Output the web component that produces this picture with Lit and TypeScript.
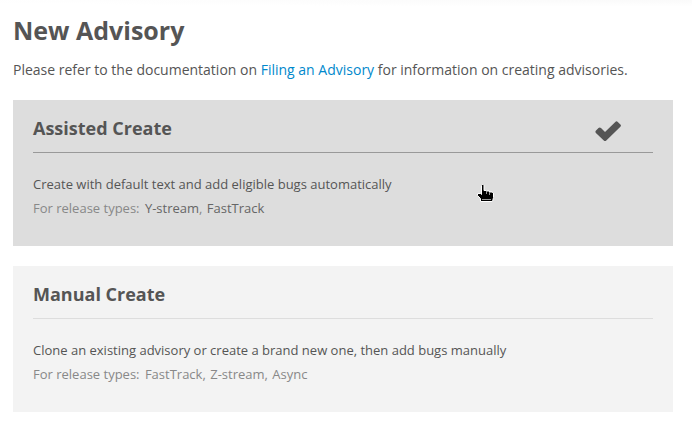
import { LitElement, html, css, nothing } from "lit";
import { customElement, state } from "lit/decorators.js";

interface Mode {
  id: string;
  title: string;
  text: string;
  types: string[];
}

const MODES: Mode[] = [
  {
    id: "assisted",
    title: "Assisted Create",
    text: "Create with default text and add eligible bugs automatically",
    types: ["Y-stream", "FastTrack"],
  },
  {
    id: "manual",
    title: "Manual Create",
    text: "Clone an existing advisory or create a brand new one, then add bugs manually",
    types: ["FastTrack", "Z-stream", "Async"],
  },
];

@customElement("app-root")
export class AppRoot extends LitElement {
  @state() private selected = "assisted";

  static styles = css`
    :host {
      display: block;
      color: #555;
      font-family: "Open Sans", "Noto Sans", sans-serif;
      font-size: 14px;
      line-height: 20px;
      background: radial-gradient(ellipse at top right, #fafafa, #fff 80%) top right / 100% 6px no-repeat #fff;
    }
    main {
      padding: 10px 19px 20px 13px;
    }
    h1 {
      margin: 0 0 10px;
      font-size: 25px;
      line-height: 40px;
      font-weight: 700;
    }
    p {
      margin: 0 0 20px;
    }
    a {
      color: #08c;
      text-decoration: none;
    }
    .modes {
      display: flex;
      flex-direction: column;
      gap: 20px;
    }
    .mode {
      position: relative;
      display: block;
      width: 100%;
      margin: 0;
      padding: 14px 20px 26px;
      border: 0;
      background: #f3f3f3;
      color: inherit;
      font: inherit;
      font-size: 13px;
      line-height: 24px;
      text-align: left;
      cursor: pointer;
    }
    .mode.selected {
      background: #ddd;
    }
    .head {
      display: flex;
      justify-content: space-between;
      align-items: center;
      height: 38px;
      margin-bottom: 19px;
      padding-right: 32px;
      border-bottom: 1px solid #ddd;
    }
    .selected .head {
      border-color: #999;
    }
    .title {
      font-size: 18px;
      line-height: 28px;
      font-weight: 700;
      padding-bottom: 10px;
    }
    .check {
      width: 26px;
      height: 20px;
      margin-bottom: 4px;
      fill: #555;
    }
    .row {
      display: block;
    }
    .types {
      color: #888;
    }
    .list {
      margin-left: 2px;
    }
    .type + .type {
      margin-left: 1px;
    }
    .selected .name {
      color: #666;
    }
    .pointer {
      position: absolute;
      left: 464px;
      top: 84px;
      width: 17px;
      height: 18px;
    }
  `;

  private renderMode(mode: Mode) {
    const on = mode.id === this.selected;
    return html`<button
      type="button"
      class="mode ${on ? "selected" : ""}"
      aria-pressed=${on ? "true" : "false"}
      @click=${() => (this.selected = mode.id)}
    >
      <span class="head">
        <span class="title">${mode.title}</span>
        ${on
          ? html`<svg class="check" viewBox="0 0 26 20" aria-hidden="true">
              <path d="M1 9.5 3.5 7Q4.7 6 6 7L10 11 20.3.9Q21.5-.2 22.8.9L25.4 3.4Q26.5 4.6 25.4 5.8L11.3 19.4Q10 20.5 8.8 19.4L.9 12Q-.2 10.8 1 9.5Z" />
            </svg>`
          : nothing}
      </span>
      <span class="row">${mode.text}</span>
      <span class="row types"
        >For release types:
        <span class="list"
          >${mode.types.map(
            (t, i) => html`<span class="type"
              ><span class="name">${t}</span>${i < mode.types.length - 1 ? ", " : ""}</span
            >`
          )}</span
        ></span
      >
      ${on
        ? html`<svg class="pointer" viewBox="0 0 17 18" aria-hidden="true">
            <path
              d="M4.500 1.500Q4.500.5 5.500.5T7 1.500V6.500H9.500L10 7H12L13 8H15L16.500 9V13.500L15.500 17.500H3.500V14.500L.5 11.500V9.500H3.500L4.500 10.500Z"
              fill="#000"
              stroke="#fff"
            />
            <path d="M9.500 7v3M12.500 8v3M5 15.500h9" stroke="#fff" stroke-width=".6" />
          </svg>`
        : nothing}
    </button>`;
  }

  render() {
    return html`<main>
      <h1>New Advisory</h1>
      <p>
        Please refer to the documentation on
        <a href="#filing">Filing an Advisory</a> for information on creating advisories.
      </p>
      <div class="modes">${MODES.map((m) => this.renderMode(m))}</div>
    </main>`;
  }
}
